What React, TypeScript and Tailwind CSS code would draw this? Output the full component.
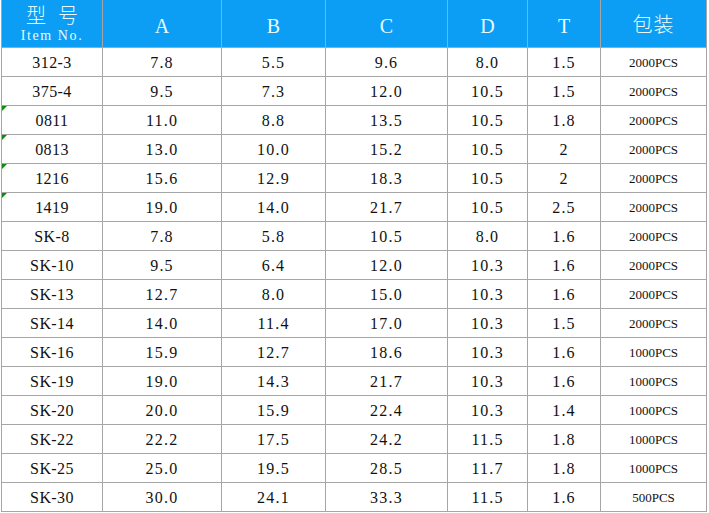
import React from 'react';

const rows = [
  ['312-3', '7.8', '5.5', '9.6', '8.0', '1.5', '2000PCS'],
  ['375-4', '9.5', '7.3', '12.0', '10.5', '1.5', '2000PCS'],
  ['0811', '11.0', '8.8', '13.5', '10.5', '1.8', '2000PCS'],
  ['0813', '13.0', '10.0', '15.2', '10.5', '2', '2000PCS'],
  ['1216', '15.6', '12.9', '18.3', '10.5', '2', '2000PCS'],
  ['1419', '19.0', '14.0', '21.7', '10.5', '2.5', '2000PCS'],
  ['SK-8', '7.8', '5.8', '10.5', '8.0', '1.6', '2000PCS'],
  ['SK-10', '9.5', '6.4', '12.0', '10.3', '1.6', '2000PCS'],
  ['SK-13', '12.7', '8.0', '15.0', '10.3', '1.6', '2000PCS'],
  ['SK-14', '14.0', '11.4', '17.0', '10.3', '1.5', '2000PCS'],
  ['SK-16', '15.9', '12.7', '18.6', '10.3', '1.6', '1000PCS'],
  ['SK-19', '19.0', '14.3', '21.7', '10.3', '1.6', '1000PCS'],
  ['SK-20', '20.0', '15.9', '22.4', '10.3', '1.4', '1000PCS'],
  ['SK-22', '22.2', '17.5', '24.2', '11.5', '1.8', '1000PCS'],
  ['SK-25', '25.0', '19.5', '28.5', '11.7', '1.8', '1000PCS'],
  ['SK-30', '30.0', '24.1', '33.3', '11.5', '1.6', '500PCS'],
];

// cell widths include the right border
const widths = ['w-[101px]', 'w-[119px]', 'w-[104px]', 'w-[122px]', 'w-[80px]', 'w-[73px]', 'w-[106px]'];

// Excel "number stored as text" markers
const flagged = ['0811', '0813', '1216', '1419'];

const serif = "font-['Liberation_Serif','Noto_Sans_CJK_SC',serif]";
const cjk = "font-['Noto_Sans_CJK_SC','Liberation_Sans',sans-serif]";

export default function App() {
  return (
    <div className="bg-white w-[709px] h-[513px]">
      <div className="ml-px w-[706px] border-l border-[#a6a6a6]">
        {/* header */}
        <div className="flex h-[48px] bg-[#0c9df4] border-b border-[#a6a6a6] text-[#e8fbff]">
          <div className={`${widths[0]} border-r border-[#a6a6a6] flex flex-col items-center pt-[2px]`}>
            <span className={`${cjk} font-light text-[20px] leading-[26px] tracking-[12px] pl-[12px]`}>型号</span>
            <span className={`${serif} text-[14px] leading-[16px] tracking-[1.6px]`}>Item No.</span>
          </div>
          {['A', 'B', 'C', 'D', 'T'].map((h, i) => (
            <div
              key={h}
              className={`${widths[i + 1]} border-r border-[#a6a6a6] flex items-center justify-center ${serif} text-[20px] pt-[4px]`}
            >
              {h}
            </div>
          ))}
          <div className={`${widths[6]} border-r border-[#a6a6a6] flex items-center justify-center ${cjk} font-light text-[20px] tracking-[1px]`}>
            包装
          </div>
        </div>

        {/* body */}
        {rows.map((r) => (
          <div key={r[0]} className="flex h-[29px] border-b border-[#a6a6a6] text-[#111]">
            {r.map((v, i) => (
              <div
                key={i}
                className={`${widths[i]} relative border-r border-[#a6a6a6] flex items-center justify-center pt-[2px] ${serif} ${
                  i === 6 ? 'text-[13px]' : i === 0 ? 'text-[16px] tracking-[0.4px]' : 'text-[16px] tracking-[1.2px]'
                }`}
              >
                {i === 0 && flagged.includes(v) && (
                  <span className="absolute left-0 top-0 w-0 h-0 border-t-[5px] border-r-[5px] border-t-[#128a12] border-r-transparent" />
                )}
                {v}
              </div>
            ))}
          </div>
        ))}
      </div>
    </div>
  );
}
